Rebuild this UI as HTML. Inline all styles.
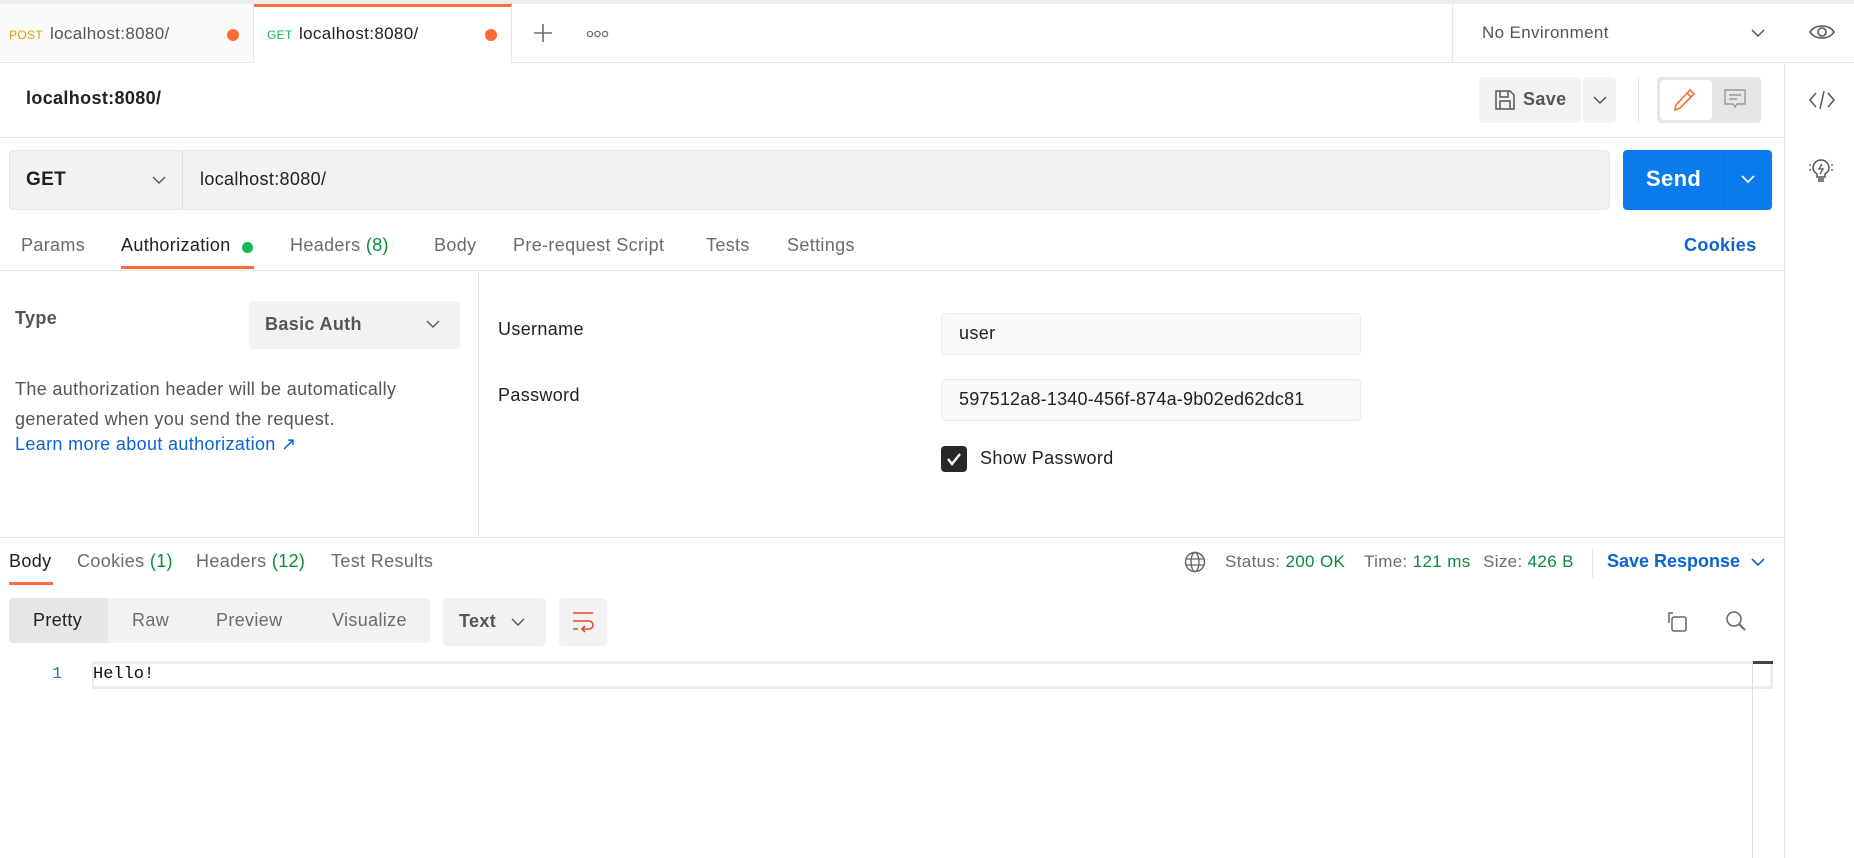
<!DOCTYPE html>
<html><head><meta charset="utf-8"><style>
*{box-sizing:border-box;margin:0;padding:0}
body{width:1854px;height:858px;overflow:hidden;background:#fff;font-family:"Liberation Sans",sans-serif;color:#212121;position:relative;font-size:16px;letter-spacing:0.35px}
.a{position:absolute;white-space:nowrap}
.g{color:#6b6b6b}
.grn{color:#0b8a3c}
.box{position:absolute;background:#f2f2f2;border-radius:4px}
svg{position:absolute}
</style></head><body>
<div class="a" style="left:0;top:0;width:1854px;height:4px;background:#ededed"></div>
<div class="a" style="left:0;top:62px;width:1854px;height:1px;background:#e6e6e6"></div>
<div class="a" style="left:0;top:4px;width:254px;height:58px;background:#fafafa;border-right:1px solid #e6e6e6"></div>
<div class="a" style="left:9px;top:28px;font-size:12px;color:#e0a400">POST</div>
<div class="a" style="left:50px;top:24px;font-size:17px;color:#555">localhost:8080/</div>
<div class="a" style="left:227px;top:29px;width:12px;height:12px;border-radius:50%;background:#ff6c37"></div>
<div class="a" style="left:254px;top:4px;width:258px;height:59px;background:#fff;border-top:3px solid #ff6c37;border-right:1px solid #e6e6e6"></div>
<div class="a" style="left:267px;top:28px;font-size:12px;color:#0cbb52">GET</div>
<div class="a" style="left:299px;top:24px;font-size:17px;color:#212121">localhost:8080/</div>
<div class="a" style="left:485px;top:29px;width:12px;height:12px;border-radius:50%;background:#ff6c37"></div>
<svg style="left:533px;top:23px" width="20" height="20"><path d="M10 1v18M1 10h18" stroke="#6b6b6b" stroke-width="1.6"/></svg>
<svg style="left:586px;top:29px" width="24" height="10"><circle cx="4" cy="5" r="2.6" fill="none" stroke="#6b6b6b" stroke-width="1.3"/><circle cx="11.5" cy="5" r="2.6" fill="none" stroke="#6b6b6b" stroke-width="1.3"/><circle cx="19" cy="5" r="2.6" fill="none" stroke="#6b6b6b" stroke-width="1.3"/></svg>
<div class="a" style="left:1452px;top:4px;width:1px;height:58px;background:#e6e6e6"></div>
<div class="a" style="left:1482px;top:23px;font-size:17px;color:#555">No Environment</div>
<svg style="left:1750px;top:26px" width="16" height="14"><path d="M2 4l6 6 6-6" fill="none" stroke="#555" stroke-width="1.5"/></svg>
<svg style="left:1808px;top:22px" width="28" height="20"><path d="M2 10C7 2 21 2 26 10C21 18 7 18 2 10Z" fill="none" stroke="#555" stroke-width="1.6"/><circle cx="14" cy="10" r="4" fill="none" stroke="#555" stroke-width="1.6"/></svg>
<div class="a" style="left:1784px;top:63px;width:1px;height:795px;background:#e6e6e6"></div>
<svg style="left:1808px;top:88px" width="28" height="24"><path d="M8 5L2 12l6 7M20 5l6 7-6 7M16 3l-4 18" fill="none" stroke="#555" stroke-width="1.5"/></svg>
<svg style="left:1808px;top:158px" width="26" height="28"><path d="M9 19v-3c-3-2-4-4-4-6a8 8 0 0 1 16 0c0 2-1 4-4 6v3zM10 21h6M10 23h6" fill="none" stroke="#555" stroke-width="1.5"/><path d="M14 6l-3 5h4l-3 5" fill="none" stroke="#555" stroke-width="1.3"/><path d="M1 7h2M1 12h2M23 7h2M23 12h2" stroke="#555" stroke-width="1.3"/></svg>
<div class="a" style="left:26px;top:88px;font-size:18px;font-weight:bold;color:#212121">localhost:8080/</div>
<div class="box" style="left:1479px;top:77px;width:102px;height:46px"></div>
<svg style="left:1494px;top:89px" width="22" height="22"><path d="M2 2h14l4 4v14H2zM6 2v6h8V2M6 20v-8h10v8" fill="none" stroke="#555" stroke-width="1.5"/></svg>
<div class="a" style="left:1523px;top:89px;font-size:18px;font-weight:bold;color:#555">Save</div>
<div class="box" style="left:1583px;top:77px;width:33px;height:46px"></div>
<svg style="left:1592px;top:93px" width="16" height="14"><path d="M2 4l6 6 6-6" fill="none" stroke="#555" stroke-width="1.5"/></svg>
<div class="a" style="left:1638px;top:77px;width:1px;height:46px;background:#e6e6e6"></div>
<div class="box" style="left:1657px;top:77px;width:104px;height:46px;background:#e6e6e6"></div>
<div class="a" style="left:1660px;top:80px;width:52px;height:40px;background:#fff;border-radius:4px"></div>
<svg style="left:1674px;top:88px" width="22" height="24"><path d="M16 2l4 4L6 20l-5 2 1-5z M13 5l4 4" fill="none" stroke="#ff6c37" stroke-width="1.6"/></svg>
<svg style="left:1724px;top:89px" width="22" height="22"><path d="M1 1h20v14H13l-2 3-2-3H1z M5 6h12M5 10h8" fill="none" stroke="#999" stroke-width="1.4"/></svg>
<div class="a" style="left:0;top:137px;width:1784px;height:1px;background:#e6e6e6"></div>
<div class="box" style="left:9px;top:150px;width:1601px;height:60px;border:1px solid #e6e6e6"></div>
<div class="a" style="left:182px;top:151px;width:1px;height:58px;background:#e0e0e0"></div>
<div class="a" style="left:26px;top:169px;font-size:19px;font-weight:bold">GET</div>
<svg style="left:151px;top:174px" width="16" height="12"><path d="M2 3l6 6 6-6" fill="none" stroke="#555" stroke-width="1.4"/></svg>
<div class="a" style="left:200px;top:169px;font-size:18px;color:#212121">localhost:8080/</div>
<div class="a" style="left:1623px;top:150px;width:149px;height:60px;background:#097bed;border-radius:4px"></div>
<div class="a" style="left:1724px;top:150px;width:1px;height:60px;background:#0a6fd4"></div>
<div class="a" style="left:1646px;top:166px;font-size:22px;font-weight:bold;color:#fff">Send</div>
<svg style="left:1740px;top:173px" width="16" height="12"><path d="M2 3l6 6 6-6" fill="none" stroke="#fff" stroke-width="1.6"/></svg>
<div class="a g" style="left:21px;top:235px;font-size:18px">Params</div>
<div class="a" style="left:121px;top:235px;font-size:18px">Authorization</div>
<div class="a" style="left:242px;top:242px;width:11px;height:11px;border-radius:50%;background:#0cbb52"></div>
<div class="a g" style="left:290px;top:235px;font-size:18px">Headers <span class="grn">(8)</span></div>
<div class="a g" style="left:434px;top:235px;font-size:18px">Body</div>
<div class="a g" style="left:513px;top:235px;font-size:18px">Pre-request Script</div>
<div class="a g" style="left:706px;top:235px;font-size:18px">Tests</div>
<div class="a g" style="left:787px;top:235px;font-size:18px">Settings</div>
<div class="a" style="left:1684px;top:235px;font-size:18px;font-weight:bold;color:#0b64d1">Cookies</div>
<div class="a" style="left:121px;top:266px;width:133px;height:3px;background:#ff6c37"></div>
<div class="a" style="left:0;top:270px;width:1784px;height:1px;background:#e6e6e6"></div>
<div class="a" style="left:478px;top:271px;width:1px;height:267px;background:#e6e6e6"></div>
<div class="a" style="left:15px;top:308px;font-size:18px;font-weight:bold;color:#555">Type</div>
<div class="box" style="left:249px;top:301px;width:211px;height:48px"></div>
<div class="a" style="left:265px;top:314px;font-size:18px;font-weight:bold;color:#555">Basic Auth</div>
<svg style="left:425px;top:318px" width="16" height="12"><path d="M2 3l6 6 6-6" fill="none" stroke="#555" stroke-width="1.4"/></svg>
<div class="a" style="left:15px;top:374px;font-size:18px;line-height:30px;color:#555">The authorization header will be automatically<br>generated when you send the request.</div>
<div class="a" style="left:15px;top:434px;font-size:18px;color:#0b64d1">Learn more about authorization ↗</div>
<div class="a" style="left:498px;top:319px;font-size:18px">Username</div>
<div class="a" style="left:498px;top:385px;font-size:18px">Password</div>
<div class="a" style="left:941px;top:313px;width:420px;height:42px;background:#f9f9f9;border:1px solid #ececec;border-radius:4px"></div>
<div class="a" style="left:959px;top:323px;font-size:18px">user</div>
<div class="a" style="left:941px;top:379px;width:420px;height:42px;background:#f9f9f9;border:1px solid #ececec;border-radius:4px"></div>
<div class="a" style="left:959px;top:389px;font-size:18px;letter-spacing:0.2px">597512a8-1340-456f-874a-9b02ed62dc81</div>
<div class="a" style="left:941px;top:446px;width:26px;height:26px;background:#282828;border-radius:4px"></div>
<svg style="left:945px;top:450px" width="18" height="18"><path d="M3 9l4 5 8-10" fill="none" stroke="#fff" stroke-width="2.4"/></svg>
<div class="a" style="left:980px;top:448px;font-size:18px">Show Password</div>
<div class="a" style="left:0;top:537px;width:1784px;height:1px;background:#e6e6e6"></div>
<div class="a" style="left:9px;top:551px;font-size:18px">Body</div>
<div class="a g" style="left:77px;top:551px;font-size:18px">Cookies <span class="grn">(1)</span></div>
<div class="a g" style="left:196px;top:551px;font-size:18px">Headers <span class="grn">(12)</span></div>
<div class="a g" style="left:331px;top:551px;font-size:18px">Test Results</div>
<div class="a" style="left:9px;top:582px;width:44px;height:3px;background:#ff6c37"></div>
<svg style="left:1184px;top:551px" width="22" height="22"><circle cx="11" cy="11" r="9.5" fill="none" stroke="#666" stroke-width="1.4"/><ellipse cx="11" cy="11" rx="4" ry="9.5" fill="none" stroke="#666" stroke-width="1.4"/><path d="M2 8h18M2 14h18" stroke="#666" stroke-width="1.3"/></svg>
<div class="a g" style="left:1225px;top:552px;font-size:17px">Status: <span class="grn">200 OK</span></div>
<div class="a g" style="left:1364px;top:552px;font-size:17px">Time: <span class="grn">121 ms</span></div>
<div class="a g" style="left:1483px;top:552px;font-size:17px">Size: <span class="grn">426 B</span></div>
<div class="a" style="left:1592px;top:548px;width:1px;height:30px;background:#e6e6e6"></div>
<div class="a" style="left:1607px;top:551px;font-size:18px;font-weight:bold;color:#0b64d1;letter-spacing:0">Save Response</div>
<svg style="left:1750px;top:556px" width="16" height="12"><path d="M2 3l6 6 6-6" fill="none" stroke="#0b64d1" stroke-width="1.6"/></svg>
<div class="box" style="left:9px;top:598px;width:421px;height:45px"></div>
<div class="a" style="left:9px;top:598px;width:99px;height:45px;background:#e6e6e6;border-radius:4px 0 0 4px"></div>
<div class="a" style="left:33px;top:610px;font-size:18px">Pretty</div>
<div class="a g" style="left:132px;top:610px;font-size:18px">Raw</div>
<div class="a g" style="left:216px;top:610px;font-size:18px">Preview</div>
<div class="a g" style="left:332px;top:610px;font-size:18px">Visualize</div>
<div class="box" style="left:443px;top:598px;width:103px;height:48px"></div>
<div class="a" style="left:459px;top:611px;font-size:18px;font-weight:bold;color:#555">Text</div>
<svg style="left:510px;top:616px" width="16" height="12"><path d="M2 3l6 6 6-6" fill="none" stroke="#555" stroke-width="1.4"/></svg>
<div class="box" style="left:559px;top:598px;width:48px;height:48px"></div>
<svg style="left:571px;top:610px" width="26" height="24"><path d="M2 3h20M2 11h16a4 4 0 0 1 0 8h-6M14 16l-3 3 3 3M2 19h5" fill="none" stroke="#e0492b" stroke-width="1.6"/></svg>
<svg style="left:1666px;top:610px" width="24" height="24"><path d="M7 3H3v10" fill="none" stroke="#666" stroke-width="1.5"/><rect x="6" y="7" width="14" height="14" rx="2" fill="none" stroke="#666" stroke-width="1.5"/></svg>
<svg style="left:1725px;top:610px" width="24" height="24"><circle cx="9" cy="9" r="7" fill="none" stroke="#666" stroke-width="1.5"/><path d="M14 14l6 6" stroke="#666" stroke-width="2"/></svg>
<div class="a" style="left:92px;top:661px;width:1681px;height:28px;border:3px solid #ececec;border-left-width:2px"></div>
<div class="a" style="left:52px;top:665px;font-size:17px;font-family:'Liberation Mono',monospace;color:#2a7fa8;letter-spacing:0">1</div>
<div class="a" style="left:93px;top:665px;font-size:17px;font-family:'Liberation Mono',monospace;color:#111;letter-spacing:0">Hello!</div>
<div class="a" style="left:1752px;top:661px;width:1px;height:197px;background:#ddd"></div>
<div class="a" style="left:1753px;top:661px;width:20px;height:3px;background:#444"></div>
</body></html>
